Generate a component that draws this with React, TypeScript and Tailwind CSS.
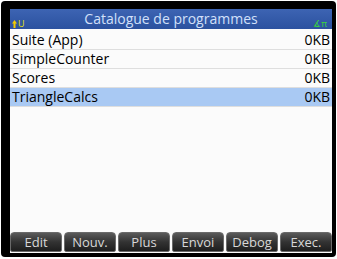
import React from "react";

const programs = [
  { name: "Suite (App)", size: "0KB" },
  { name: "SimpleCounter", size: "0KB" },
  { name: "Scores", size: "0KB" },
  { name: "TriangleCalcs", size: "0KB", selected: true },
];

const menu = ["Edit", "Nouv.", "Plus", "Envoi", "Debog", "Exec."];

export default function App() {
  return (
    <div className="w-[337px] h-[259px] bg-white p-[1px]">
      <div className="w-[335px] h-[256px] bg-black rounded-[4px] pt-[8px] pl-[9px]">
        <div
          className="w-[322px] h-[244px] bg-[#fbfbfb] flex flex-col"
          style={{ fontFamily: '"Open Sans", "Noto Sans", sans-serif' }}
        >
          {/* title bar */}
          <div className="relative h-[20px] bg-gradient-to-b from-[#3d64b3] to-[#2b519f] flex items-center justify-center">
            <span className="text-[14px] leading-none text-[#d2e0fa]">Catalogue de programmes</span>
            <span className="absolute left-[2px] bottom-[1px] flex items-end gap-[1px]">
              <svg width="5" height="8" viewBox="0 0 5 8">
                <path d="M2.5 0 L5 3.5 L3.5 3.5 L3.5 8 L1.5 8 L1.5 3.5 L0 3.5 Z" fill="#f2cc00" />
              </svg>
              <span className="text-[9px] leading-none text-[#e6e200]">U</span>
            </span>
            <span className="absolute right-[5px] bottom-[1px] text-[9px] leading-none text-[#3ad43c]">∡π</span>
          </div>

          {/* program list */}
          <div className="flex flex-col pt-[2px]">
            {programs.map((p) => (
              <div
                key={p.name}
                className={`h-[19px] flex items-center justify-between pl-[2px] pr-[2px] border-b border-[#dedede] text-[14px] leading-none text-black ${
                  p.selected ? "bg-[#a9c9f3]" : ""
                }`}
              >
                <span>{p.name}</span>
                <span>{p.size}</span>
              </div>
            ))}
          </div>

          <div className="flex-1" />

          {/* soft menu */}
          <div className="grid grid-cols-6 gap-[2px] h-[20px] mb-[1px]">
            {menu.map((m) => (
              <div
                key={m}
                className="rounded-t-[4px] rounded-b-[2px] border border-[#6a6a6a] bg-gradient-to-b from-[#5a5a5a] via-[#333] to-[#1e1e1e] flex items-center justify-center text-[13px] leading-none text-[#d8d8d8]"
              >
                {m}
              </div>
            ))}
          </div>
        </div>
      </div>
    </div>
  );
}
